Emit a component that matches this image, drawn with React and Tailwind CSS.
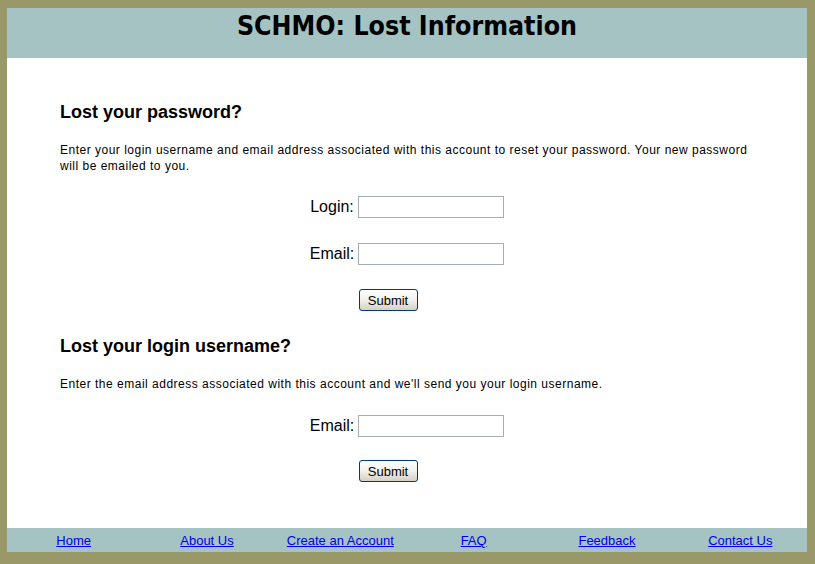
const links = ['Home', 'About Us', 'Create an Account', 'FAQ', 'Feedback', 'Contact Us'];

const Field = ({ label }) => (
  <div className="flex items-center justify-center">
    <span className="text-[16px] text-black mr-[4px]">{label}</span>
    <input type="text" className="w-[146px] h-[22px] border border-[#a5acb5] bg-white outline-none" />
  </div>
);

const SubmitButton = () => (
  <div className="flex justify-center pr-[38px]">
    <button className="w-[59px] h-[22px] rounded-[3px] border border-[#003c74] bg-gradient-to-b from-white via-[#f0f0ea] to-[#d6d0c5] text-[13px] text-black leading-none">
      Submit
    </button>
  </div>
);

const App = () => {
  return (
    <div
      className="w-[815px] h-[564px] bg-[#989868] pt-[8px] pl-[7px] pr-[8px] pb-[12px] flex flex-col"
      style={{ fontFamily: '"Liberation Sans", Arial, sans-serif' }}
    >
      {/* Header */}
      <div className="h-[50px] bg-[#a5c3c3] flex justify-center pt-[2px]">
        <h1 className="text-[26.5px] font-bold text-black leading-[32px]" style={{ fontFamily: '"DejaVu Sans Condensed", "DejaVu Sans", sans-serif' }}>
          SCHMO: Lost Information
        </h1>
      </div>

      {/* Body */}
      <div className="flex-1 bg-white px-[53px] pt-[42px]">
        <h2 className="text-[18px] font-bold text-black leading-[24px]">Lost your password?</h2>
        <p className="text-[12px] text-black leading-[16px] mt-[18px] pr-[6px] tracking-[0.5px]">
          Enter your login username and email address associated with this account to reset your password. Your new password will be emailed to you.
        </p>
        <div className="mt-[21px] flex flex-col gap-[23px]">
          <Field label="Login:" />
          <Field label="Email:" />
        </div>
        <div className="mt-[23px]">
          <SubmitButton />
        </div>

        <h2 className="text-[18px] font-bold text-black leading-[24px] mt-[23px]">Lost your login username?</h2>
        <p className="text-[12px] text-black leading-[16px] mt-[18px] tracking-[0.5px]">
          Enter the email address associated with this account and we'll send you your login username.
        </p>
        <div className="mt-[22px]">
          <Field label="Email:" />
        </div>
        <div className="mt-[22px]">
          <SubmitButton />
        </div>
      </div>

      {/* Footer */}
      <div className="h-[24px] bg-[#a5c3c3] grid grid-cols-6 items-center">
        {links.map((l) => (
          <div key={l} className="text-center">
            <a href="#" className="text-[13px] text-[#0000ee] underline">{l}</a>
          </div>
        ))}
      </div>
    </div>
  );
};

export default App;
